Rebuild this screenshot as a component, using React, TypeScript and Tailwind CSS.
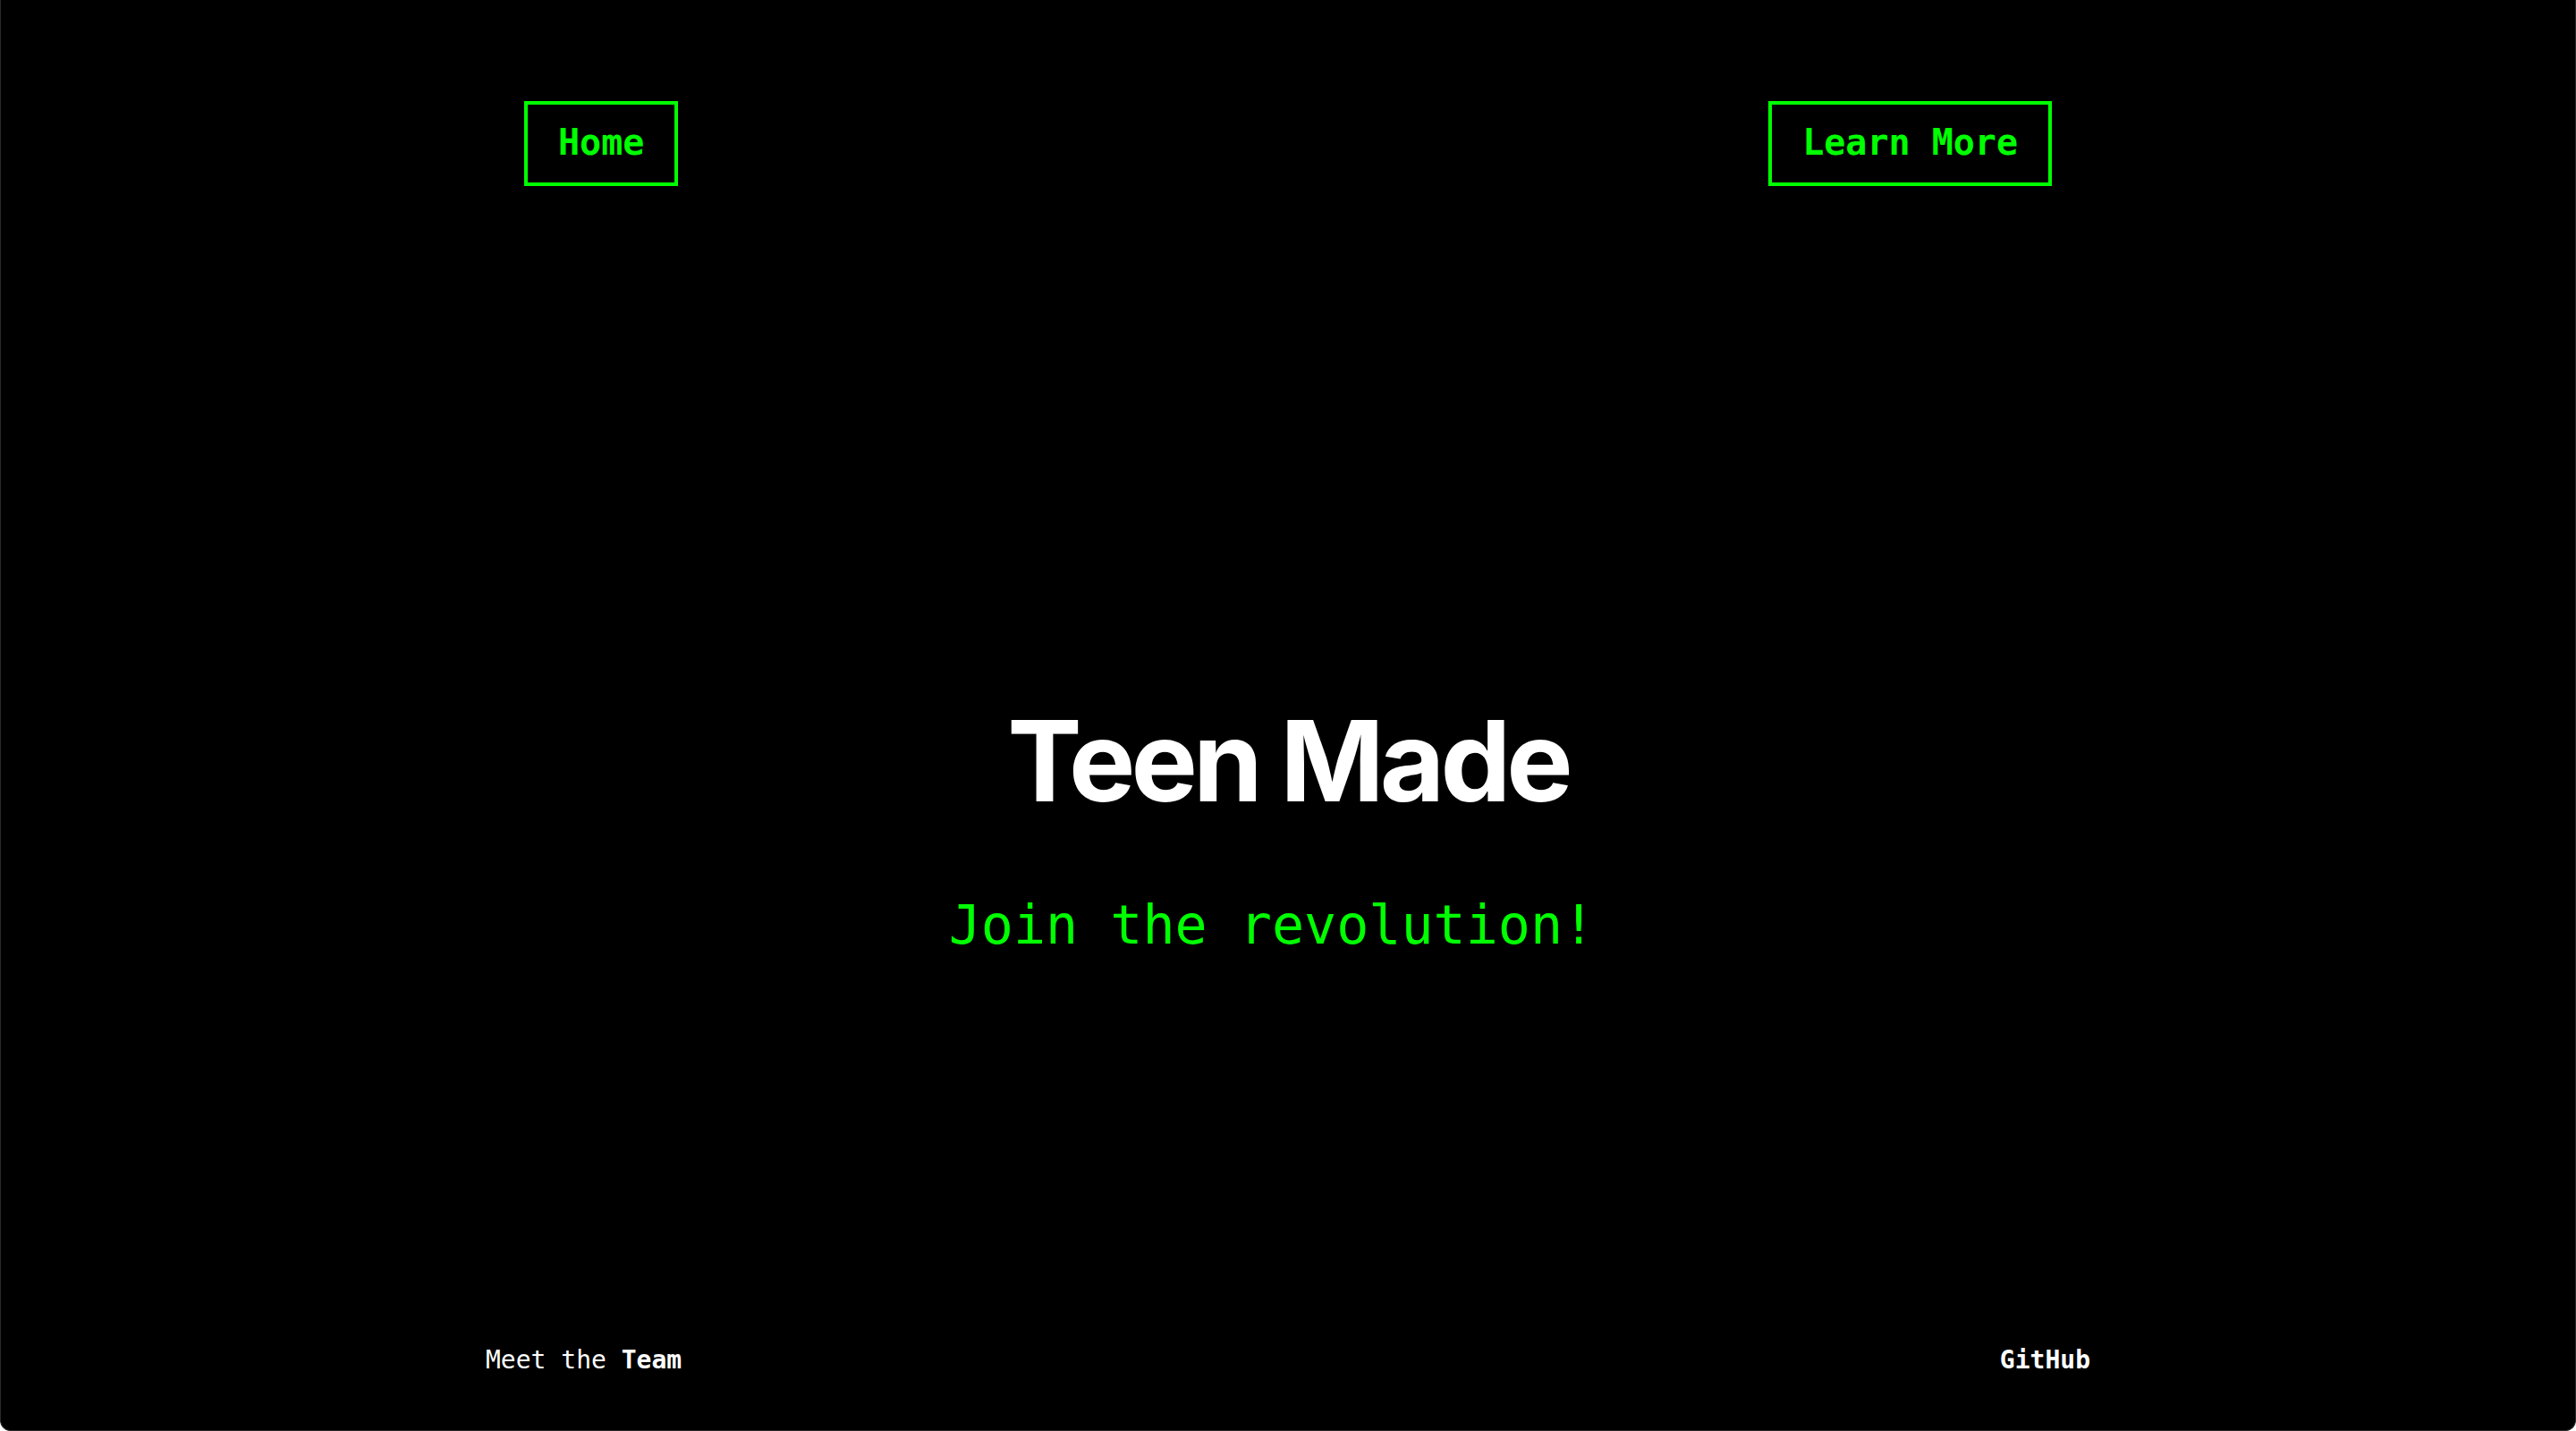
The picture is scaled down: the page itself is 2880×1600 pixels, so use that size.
const mono = "font-['DejaVu_Sans_Mono',monospace]";

const NavButton = ({ label }: { label: string }) => (
  <a
    href="#"
    className={`${mono} flex h-[95px] items-center border-4 border-[#00ff00] px-[34px] pb-[4px] text-[40px] font-bold text-[#00ff00]`}
  >
    {label}
  </a>
);

const App = () => {
  return (
    <div className="flex h-screen flex-col rounded-b-[12px] border-x border-b border-[#2a2a2a] bg-black">
      {/* top nav */}
      <nav className="mx-auto flex w-[1708px] justify-between pt-[113px]">
        <NavButton label="Home" />
        <NavButton label="Learn More" />
      </nav>

      {/* hero */}
      <main className="mt-[580px] flex flex-col items-center">
        <h1 className="font-['Inter',sans-serif] text-[125px] leading-none font-bold tracking-[-0.04em] text-white">
          Teen Made
        </h1>
        <p className={`${mono} mt-[91px] text-6xl text-[#00ff00]`}>
          Join the revolution!<span className="opacity-0">_</span>
        </p>
      </main>

      {/* footer */}
      <footer
        className={`${mono} mx-auto mt-auto flex w-[1794px] justify-between pb-[57px] text-[28px] leading-[42px] text-white`}
      >
        <a href="#">
          Meet the <span className="font-bold">Team</span>
        </a>
        <a href="#" className="font-bold">
          GitHub
        </a>
      </footer>
    </div>
  );
};

export default App;
